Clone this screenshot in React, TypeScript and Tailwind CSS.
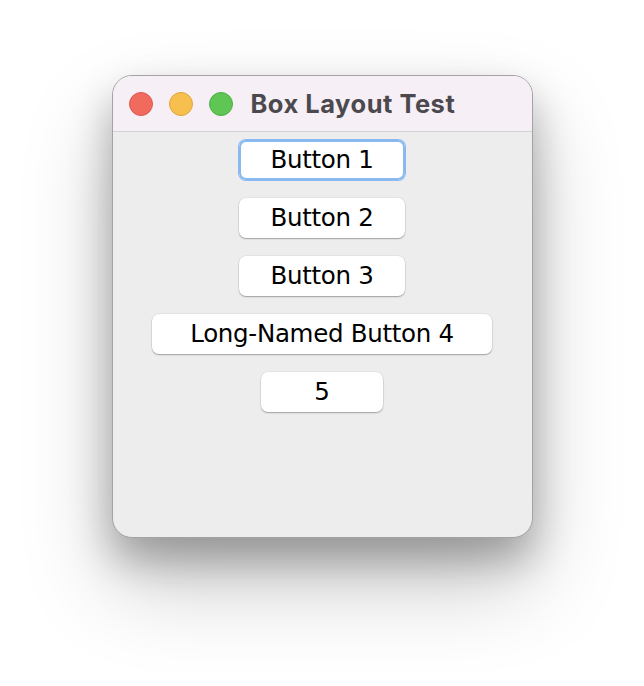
import React from "react";

const btnFont = {
  fontFamily: '"DejaVu Sans", "Liberation Sans", sans-serif',
};

function Btn({ label, w, focused }: { label: string; w: string; focused?: boolean }) {
  return (
    <div
      className={
        "flex h-[40px] items-center justify-center rounded-[7px] bg-white text-[24.5px] leading-none tracking-[-0.3px] text-black " +
        w +
        (focused
          ? " shadow-[0_0_0_1px_#8ab9f1,inset_0_0_0_2px_#8ab9f1]"
          : " shadow-[0_1px_1.5px_rgba(0,0,0,0.3),0_0_0_0.5px_rgba(0,0,0,0.07)]")
      }
      style={btnFont}
    >
      <span className="pt-[1px]">{label}</span>
    </div>
  );
}

export default function App() {
  return (
    <div className="min-h-[686px] w-full bg-white pt-[75px]">
      <div className="mx-auto flex h-[463px] w-[421px] flex-col overflow-hidden rounded-[20px] border border-[#a3a3a3] bg-[#ededed] shadow-[0_22px_40px_rgba(0,0,0,0.28),0_45px_90px_rgba(0,0,0,0.22)]">
        <div className="flex h-[56px] shrink-0 items-center border-b border-[#d6d1d6] bg-[#f6eff6] pl-[16px]">
          <div className="flex items-center gap-[16px]">
            <div className="h-[24px] w-[24px] rounded-full border border-[#dd5a50] bg-[#f06a5e]" />
            <div className="h-[24px] w-[24px] rounded-full border border-[#dea53c] bg-[#f7bf4d]" />
            <div className="h-[24px] w-[24px] rounded-full border border-[#4fae44] bg-[#5fc553]" />
          </div>
          <div
            className="ml-[18px] text-[25.5px] font-bold leading-none tracking-[0.5px] text-[#4b494e]"
            style={{ fontFamily: 'Inter, "Open Sans", sans-serif' }}
          >
            Box Layout Test
          </div>
        </div>
        <div className="flex flex-col items-center gap-[18px] pt-[8px]">
          <Btn label="Button 1" w="w-[166px]" focused />
          <Btn label="Button 2" w="w-[166px]" />
          <Btn label="Button 3" w="w-[166px]" />
          <Btn label="Long-Named Button 4" w="w-[340px]" />
          <Btn label="5" w="w-[122px]" />
        </div>
      </div>
    </div>
  );
}
